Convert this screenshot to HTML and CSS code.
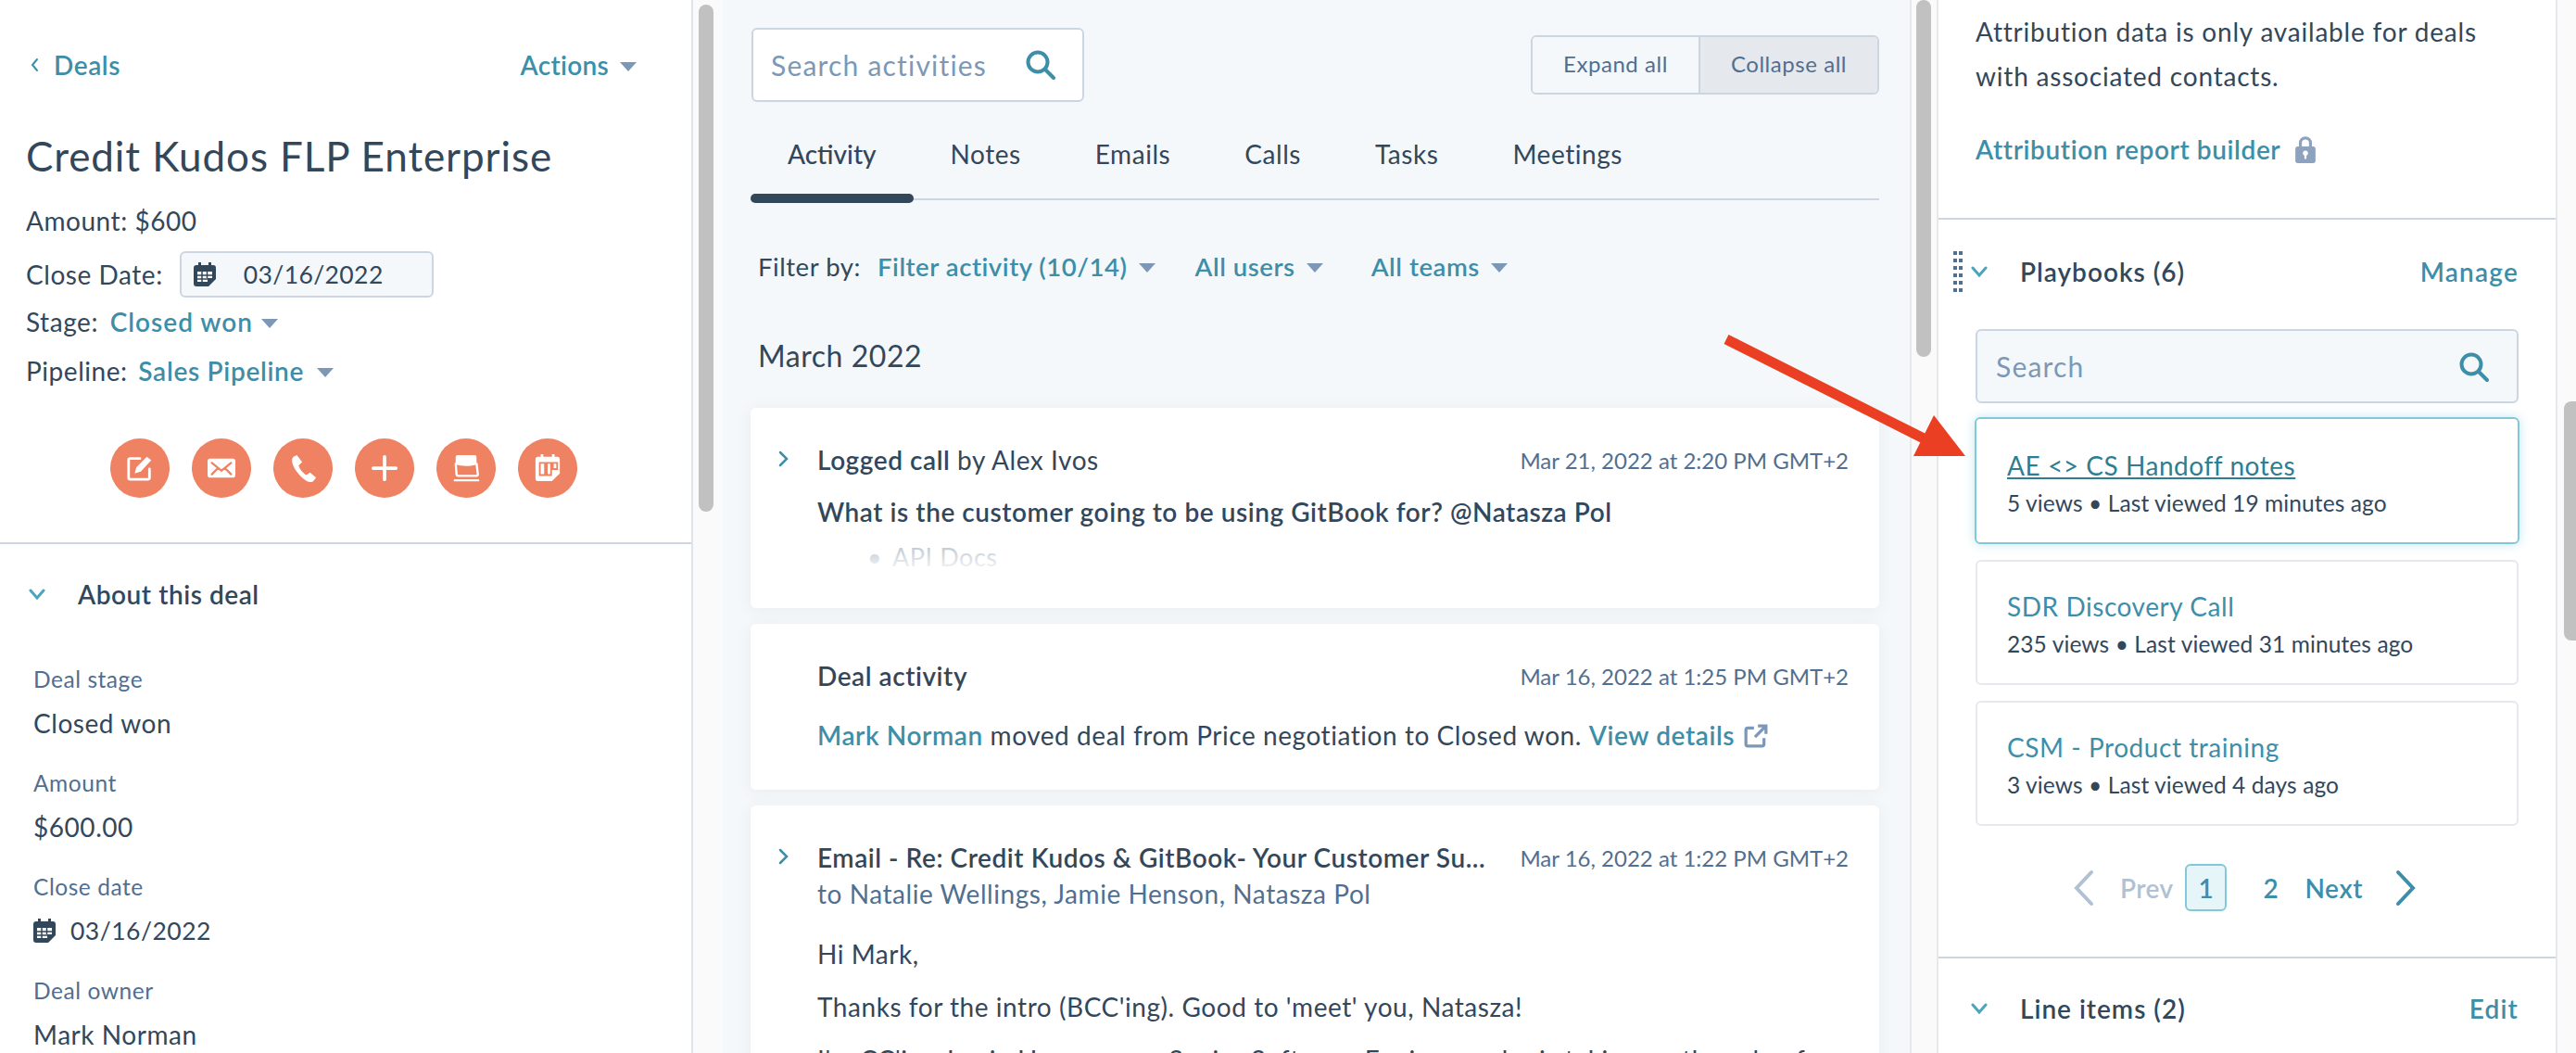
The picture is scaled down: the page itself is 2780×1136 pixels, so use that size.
FILE: index.html
```html
<!DOCTYPE html>
<html lang="en">
<head>
<meta charset="utf-8">
<title>Credit Kudos FLP Enterprise</title>
<link rel="stylesheet" href="styles.css">
</head>
<body>
<svg class="defs" width="0" height="0" aria-hidden="true">
  <symbol id="cal" viewBox="0 0 24 26">
    <path d="M5 0h3v3h8V0h3v3h2a3 3 0 0 1 3 3v12l-8 8H3a3 3 0 0 1-3-3V6a3 3 0 0 1 3-3h2z" fill="currentColor"/>
    <path d="M4 10h16v7h-5v4H4z" fill="#fff"/>
    <path d="M9 10v11M14.500 10v7M4 14h16M4 18h11" stroke="currentColor" stroke-width="1.500"/>
  </symbol>
  <symbol id="search" viewBox="0 0 32 32">
    <circle cx="13" cy="13" r="10.500" fill="none" stroke="currentColor" stroke-width="4"/>
    <path d="M21 21l9 9" stroke="currentColor" stroke-width="4" stroke-linecap="round"/>
  </symbol>
</svg>

<main class="app">
  <section class="left">
    <div class="left-head">
      <a class="link deals"><svg class="back" viewBox="0 0 10 16"><path d="M8 2L3 8l5 6" fill="none" stroke="currentColor" stroke-width="2" stroke-linecap="round"/></svg>Deals</a>
      <a class="link head-action">Actions<i class="caret caret-wide"></i></a>
    </div>
    <h1 class="title">Credit Kudos FLP Enterprise</h1>
    <div class="meta-row amount">Amount: $600</div>
    <div class="meta-row date-row">Close Date:
      <div class="date-input"><svg class="cal-icon"><use href="#cal"/></svg><span>03/16/2022</span></div>
    </div>
    <div class="meta-row stage">Stage: <a class="link">Closed won<i class="caret"></i></a></div>
    <div class="meta-row pipeline">Pipeline: <a class="link">Sales Pipeline<i class="caret"></i></a></div>
    <div class="actions">
      <span class="action"><svg viewBox="0 0 32 32"><path d="M16 5H5a2 2 0 0 0-2 2v20a2 2 0 0 0 2 2h20a2 2 0 0 0 2-2V17" fill="none" stroke="#fff" stroke-width="3" stroke-linecap="round"/><path d="M10 22l2-7L24 3l5 4-12 13z" fill="#fff"/></svg></span>
      <span class="action"><svg viewBox="0 0 32 32"><path d="M3 5h26a3 3 0 0 1 3 3v16a3 3 0 0 1-3 3H3a3 3 0 0 1-3-3V8a3 3 0 0 1 3-3z" fill="#fff"/><path d="M5 10l11 9 11-9M5 23l7-7M27 23l-7-7" fill="none" stroke="#ef8263" stroke-width="2.500" stroke-linecap="round"/></svg></span>
      <span class="action"><svg viewBox="0 0 32 32"><path d="M5 3l4-2 6 8-4 4c1 4 5 9 9 11l4-3 7 6-3 4c-2 2-6 1-9-1C12 25 6 18 4 11 3 8 3 5 5 3z" fill="#fff"/></svg></span>
      <span class="action"><svg viewBox="0 0 32 32"><path d="M16 3v26M3 16h26" stroke="#fff" stroke-width="4" stroke-linecap="round"/></svg></span>
      <span class="action"><svg viewBox="0 0 32 32"><path d="M4 3a2 2 0 0 1 2-2h20a2 2 0 0 1 2 2v9c-7 2-17 2-24 0z" fill="#fff"/><path d="M4 10l1 13c0 1 1 2 2 2h21c1 0 2-1 1.500-2L28 10" fill="none" stroke="#fff" stroke-width="2.500"/><path d="M3 30h27" stroke="#fff" stroke-width="2.500" stroke-linecap="round"/></svg></span>
      <span class="action"><svg viewBox="0 0 32 32"><path d="M8 0h3v3h10V0h3v3h3a3 3 0 0 1 3 3v16l-9 9H5a3 3 0 0 1-3-3V6a3 3 0 0 1 3-3h3z" fill="#fff"/><path d="M7 10h6v14H7zM15 10h5v14h-5zM22 10h5v7h-5z" fill="none" stroke="#ef8263" stroke-width="2"/></svg></span>
    </div>
    <div class="about">
      <h2 class="sec-head about-head"><svg class="chev" viewBox="0 0 18 12"><path d="M2 2l7 8 7-8" fill="none" stroke="#4aa5bd" stroke-width="3" stroke-linecap="round"/></svg>About this deal</h2>
      <div class="field"><div class="f-label">Deal stage</div><div class="f-value">Closed won</div></div>
      <div class="field"><div class="f-label">Amount</div><div class="f-value">$600.00</div></div>
      <div class="field"><div class="f-label">Close date</div><div class="f-value f-date"><svg class="cal-icon small"><use href="#cal"/></svg>03/16/2022</div></div>
      <div class="field"><div class="f-label">Deal owner</div><div class="f-value">Mark Norman</div></div>
    </div>
  </section>

  <div class="gutter gutter-left"><span class="thumb thumb-left"></span></div>

  <section class="middle">
    <div class="toolbar">
      <div class="act-search"><span class="placeholder">Search activities</span><svg class="search-icon"><use href="#search"/></svg></div>
      <div class="toggle"><span class="tg">Expand all</span><span class="tg tg-on">Collapse all</span></div>
    </div>
    <nav class="tabs">
      <a class="tab tab-on">Activity</a><a class="tab">Notes</a><a class="tab">Emails</a><a class="tab">Calls</a><a class="tab">Tasks</a><a class="tab">Meetings</a>
    </nav>
    <div class="filters">
      <span class="f-by">Filter by:</span>
      <a class="link">Filter activity (10/14)<i class="caret"></i></a>
      <a class="link f-users">All users<i class="caret"></i></a>
      <a class="link">All teams<i class="caret"></i></a>
    </div>
    <h3 class="month">March 2022</h3>

    <article class="card card-call">
      <div class="c-head"><svg class="c-chev" viewBox="0 0 12 18"><path d="M2 2l7 7-7 7" fill="none" stroke="#3d8ea9" stroke-width="2.500" stroke-linecap="round"/></svg><div class="c-title"><b>Logged call</b> by Alex Ivos</div><time class="c-time">Mar 21, 2022 at 2:20 PM GMT+2</time></div>
      <p class="c-strong">What is the customer going to be using GitBook for? @Natasza Pol</p>
      <ul class="c-list"><li>API Docs</li></ul>
    </article>

    <article class="card card-deal">
      <div class="c-head"><div class="c-title"><b>Deal activity</b></div><time class="c-time">Mar 16, 2022 at 1:25 PM GMT+2</time></div>
      <p class="c-body"><a class="link">Mark Norman</a> moved deal from Price negotiation to Closed won. <a class="link">View details</a><svg class="ext" viewBox="0 0 24 24"><path d="M10 4H4a2 2 0 0 0-2 2v14a2 2 0 0 0 2 2h14a2 2 0 0 0 2-2v-6M14 2h8v8M22 2L11 13" fill="none" stroke="#7c98b6" stroke-width="3"/></svg></p>
    </article>

    <article class="card card-email">
      <div class="c-head"><svg class="c-chev" viewBox="0 0 12 18"><path d="M2 2l7 7-7 7" fill="none" stroke="#3d8ea9" stroke-width="2.500" stroke-linecap="round"/></svg><div class="c-title"><b>Email - Re: Credit Kudos &amp; GitBook- Your Customer Su...</b></div><time class="c-time">Mar 16, 2022 at 1:22 PM GMT+2</time></div>
      <div class="c-to">to Natalie Wellings, Jamie Henson, Natasza Pol</div>
      <p class="c-line first">Hi Mark,</p>
      <p class="c-line">Thanks for the intro (BCC'ing). Good to 'meet' you, Natasza!</p>
      <p class="c-line">I'm CC'ing Jamie Henson, our Senior Software Engineer, who is taking on the role of</p>
    </article>
  </section>

  <div class="gutter gutter-mid"><span class="thumb thumb-mid"></span></div>

  <section class="right">
    <div class="attr">
      <p class="attr-text">Attribution data is only available for deals<br>with associated contacts.</p>
      <a class="link attr-link">Attribution report builder<svg class="lock" viewBox="0 0 24 32"><path d="M6 13V8a6 6 0 0 1 12 0v5" fill="none" stroke="#8da2bf" stroke-width="3.500"/><rect y="12" width="24" height="20" rx="3" fill="#8da2bf"/><circle cx="12" cy="20" r="3" fill="#fff"/><rect x="10.800" y="20" width="2.400" height="7" fill="#fff"/></svg></a>
    </div>
    <div class="playbooks">
      <div class="sec-head r-head">
        <svg class="grip" viewBox="0 0 10 44"><path d="M0 0h4v4H0zM6 0h4v4H6zM0 8h4v4H0zM6 8h4v4H6zM0 16h4v4H0zM6 16h4v4H6zM0 24h4v4H0zM6 24h4v4H6zM0 32h4v4H0zM6 32h4v4H6zM0 40h4v4H0zM6 40h4v4H6z" fill="#516f90"/></svg>
        <svg class="chev" viewBox="0 0 18 12"><path d="M2 2l7 8 7-8" fill="none" stroke="#4aa5bd" stroke-width="3" stroke-linecap="round"/></svg>
        <span class="r-title">Playbooks (6)</span><a class="link r-link">Manage</a>
      </div>
      <div class="pb-search"><span class="placeholder">Search</span><svg class="search-icon"><use href="#search"/></svg></div>
      <div class="pb pb-focus"><a class="pb-title pb-under">AE &lt;&gt; CS Handoff notes</a><div class="pb-meta">5 views • Last viewed 19 minutes ago</div></div>
      <div class="pb"><a class="pb-title">SDR Discovery Call</a><div class="pb-meta">235 views • Last viewed 31 minutes ago</div></div>
      <div class="pb"><a class="pb-title">CSM - Product training</a><div class="pb-meta">3 views • Last viewed 4 days ago</div></div>
      <div class="pager">
        <svg class="pg-chev" viewBox="0 0 22 40"><path d="M19 3L3 20l16 17" fill="none" stroke="#b0c1d4" stroke-width="4" stroke-linecap="round"/></svg>
        <span class="pg-prev">Prev</span>
        <span class="pg-num pg-on">1</span>
        <a class="link pg-num">2</a>
        <a class="link pg-next">Next</a>
        <svg class="pg-chev" viewBox="0 0 22 40"><path d="M3 3l16 17L3 37" fill="none" stroke="#3d8ea9" stroke-width="4" stroke-linecap="round"/></svg>
      </div>
    </div>
    <div class="sec-head r-head line-items">
      <svg class="chev" viewBox="0 0 18 12"><path d="M2 2l7 8 7-8" fill="none" stroke="#4aa5bd" stroke-width="3" stroke-linecap="round"/></svg>
      <span class="r-title">Line items (2)</span><a class="link r-link">Edit</a>
    </div>
  </section>

  <div class="gutter gutter-right"><span class="thumb thumb-right"></span></div>

  <svg class="arrow" viewBox="0 0 2780 1136" aria-hidden="true">
    <path d="M1863 366L2086 478" stroke="#ea3f22" stroke-width="11"/>
    <path d="M2087 448L2121 492H2065z" fill="#ea3f22"/>
  </svg>
</main>
</body>
</html>
```

FILE: styles.css
```css
* { box-sizing: border-box; }
html, body { margin: 0; height: 1136px; overflow: hidden; background: #fff; }
body { font-family: Lato, "Open Sans", sans-serif; color: #33475b; font-size: 28px; letter-spacing: .55px; }
.defs { position: absolute; }
h1, h2, h3, p, ul { margin: 0; padding: 0; font-weight: 400; }
b { font-weight: 600; }
.link { color: #3d8ea9; font-weight: 600; letter-spacing: .6px; }
.app { position: relative; display: grid; grid-template-columns: 748px 32px 1281px 31px 668px 20px; height: 1136px; overflow: hidden; }
.caret { display: inline-block; width: 0; height: 0; margin-left: 14px; vertical-align: 4px; border: 9px solid transparent; border-top: 10px solid #7c98b6; border-bottom: 0; }
.caret-wide { margin-left: 12px; }

/* left */
.left { border-right: 2px solid #dfe3eb; background: #fff; overflow: hidden; }
.left-head { display: flex; justify-content: space-between; align-items: center; height: 40px; margin-top: 50px; padding: 0 59px 0 32px; }
.deals { display: flex; align-items: center; gap: 16px; }
.head-action { letter-spacing: .3px; }
.back { width: 10px; height: 16px; }
.title { margin: 48px 0 0 28px; font-size: 44px; line-height: 60px; letter-spacing: .9px; }
.meta-row { padding-left: 28px; line-height: 40px; font-size: 28px; }
.amount { margin-top: 20px; }
.date-row { display: flex; align-items: center; gap: 18px; margin-top: 13px; height: 50px; }
.date-input { display: flex; align-items: center; width: 274px; height: 50px; padding-left: 13px; gap: 30px; font-size: 26.500px; letter-spacing: .4px; background: #f5f8fa; border: 2px solid #cbd6e2; border-radius: 6px; }
.cal-icon { width: 24px; height: 26px; color: #33475b; flex: none; }
.cal-icon.small { margin-right: 16px; vertical-align: -3px; }
.stage { margin-top: 6px; }
.stage .link { margin-left: 5px; letter-spacing: 1px; }
.stage .caret { margin-left: 9px; }
.pipeline { margin-top: 13px; }
.pipeline .link { margin-left: 4px; letter-spacing: .7px; }
.actions { display: flex; gap: 24px; margin-top: 53px; padding: 0 0 48px 119px; }
.action { display: flex; align-items: center; justify-content: center; width: 64px; height: 64px; border-radius: 50%; background: #ef8263; }
.action svg { width: 30px; height: 30px; }
.about { border-top: 2px solid #cbd6e2; padding-left: 36px; }
.sec-head { font-weight: 600; font-size: 28px; }
.about-head { display: flex; align-items: center; gap: 35px; height: 40px; margin: 34px 0 56px -5px; }
.chev { width: 18px; height: 12px; flex: none; }
.field { height: 112px; }
.f-label { line-height: 32px; font-size: 24.500px; color: #516f90; }
.f-value { margin-top: 8px; line-height: 46px; font-size: 28px; }
.f-date { font-size: 26.500px; letter-spacing: .5px; }

/* scroll gutters */
.gutter { background: #fafafa; position: relative; }
.thumb { position: absolute; display: block; background: #c1c1c1; border-radius: 8px; }
.thumb-left { left: 6px; width: 16px; top: 5px; height: 547px; }
.gutter-mid { border-left: 2px solid #e8e8e8; border-right: 2px solid #e8e8e8; }
.thumb-mid { left: 5px; width: 16px; top: 0; height: 385px; }
.thumb-right { left: 7px; width: 13px; top: 433px; height: 258px; border-radius: 8px 0 0 8px; }

/* middle */
.middle { background: #f5f8fa; padding: 30px 33px 0 30px; overflow: hidden; }
.toolbar { display: flex; justify-content: space-between; align-items: center; }
.act-search { display: flex; align-items: center; justify-content: space-between; width: 359px; height: 80px; margin-left: 1px; padding: 0 29px 0 19px; background: #fff; border: 2px solid #cbd6e2; border-radius: 6px; }
.placeholder { color: #7c98b6; font-size: 30px; letter-spacing: 1.200px; }
.search-icon { width: 32px; height: 32px; color: #3d8ea9; }
.toggle { display: flex; height: 64px; border: 2px solid #cbd6e2; border-radius: 6px; overflow: hidden; font-size: 24px; color: #516f90; line-height: 58px; }
.tg { display: flex; align-items: center; justify-content: center; width: 179px; background: #f5f8fa; padding-bottom: 2px; }
.tg-on { width: 193px; background: #e5e8ed; border-left: 2px solid #cbd6e2; }
.tabs { display: flex; height: 76px; margin-top: 30px; border-bottom: 2px solid #cbd6e2; }
.tab { position: relative; padding: 0 40px; line-height: 42px; height: 42px; margin-top: 5px; font-size: 28px; white-space: nowrap; }
.tab-on { font-weight: 500; letter-spacing: 0; }
.tab-on::after { content: ""; position: absolute; left: 0; right: 0; top: 64px; height: 10px; background: #33475b; border-radius: 5px; }
.filters { display: flex; align-items: center; gap: 18px; height: 40px; margin: 51px 0 0 8px; font-size: 27.500px; }
.filters .link { margin-right: 25px; white-space: nowrap; letter-spacing: .55px; }
.filters .f-users { margin-right: 34px; }
.filters .caret { margin-left: 12px; }
.month { margin: 55px 0 0 8px; line-height: 44px; font-size: 32px; }
.card { position: relative; background: #fff; border-radius: 6px; box-shadow: 0 2px 16px rgba(66, 91, 118, .07); padding: 38px 33px 0 72px; margin-bottom: 17px; overflow: hidden; }
.card-call { margin-top: 34px; height: 216px; }
.card-deal { height: 179px; }
.card-email { height: 330px; margin-bottom: 0; }
.c-head { position: relative; display: flex; justify-content: space-between; align-items: center; height: 36px; font-size: 28px; }
.c-chev { position: absolute; left: -42px; top: 8px; width: 12px; height: 18px; }
.c-title { white-space: nowrap; flex: none; }
.c-time { font-size: 24px; color: #516f90; white-space: nowrap; letter-spacing: 0; }
.c-strong { margin-top: 18px; line-height: 40px; font-weight: 600; font-size: 28px; white-space: nowrap; }
.c-list { list-style: none; margin: 9px 0 0 81px; line-height: 40px; font-size: 27px; color: #b8c4cf; position: relative; }
.c-list li::before { content: "•"; position: absolute; left: -27px; }
.card-call::after { content: ""; position: absolute; left: 0; right: 0; top: 146px; height: 34px; background: linear-gradient(rgba(255, 255, 255, 0), #fff); }
.c-body { margin-top: 26px; line-height: 40px; white-space: nowrap; font-size: 28px; }
.ext { width: 26px; height: 26px; margin-left: 10px; vertical-align: -3px; }
.c-to { margin-top: 1px; line-height: 40px; color: #516f90; font-size: 28px; }
.c-line { line-height: 40px; margin-top: 17px; white-space: nowrap; font-size: 28px; }
.c-line.first { margin-top: 25px; }

/* right */
.right { border-right: 2px solid #e5e8ed; background: #fff; overflow: hidden; }
.attr { padding: 10px 40px 0; height: 237px; border-bottom: 2px solid #cbd6e2; }
.attr-text { line-height: 48px; font-size: 28px; letter-spacing: .8px; }
.attr-link { display: flex; align-items: center; gap: 16px; height: 40px; margin-top: 35px; }
.lock { width: 22px; height: 29px; }
.playbooks { padding: 36px 40px 0; height: 797px; border-bottom: 2px solid #cbd6e2; }
.r-head { position: relative; display: flex; align-items: center; height: 40px; }
.r-head .chev { margin-left: -5px; }
.r-title { margin-left: 35px; flex: 1; letter-spacing: 1px; }
.r-link { letter-spacing: 1.200px; }
.grip { position: absolute; left: -24px; top: -2px; width: 10px; height: 44px; }
.line-items { margin-top: 34px; padding: 0 40px; }
.pb-search { display: flex; align-items: center; justify-content: space-between; height: 80px; margin-top: 42px; padding: 0 30px 0 20px; background: #f5f8fa; border: 2px solid #cbd6e2; border-radius: 6px; }
.pb-search .search-icon { margin-top: 2px; }
.pb { height: 135px; margin-top: 17px; padding: 28px 32px 0; border: 2px solid #e5e8ed; border-radius: 6px; }
.pb-focus { height: 137px; margin: 15px -1px 16px; padding-left: 33px; padding-top: 30px; border-color: #81c9d9; box-shadow: 0 0 12px rgba(129, 201, 217, .45); }
.pb-title { display: block; color: #3d8ea9; line-height: 40px; font-size: 28px; }
.pb-under { color: #2e7d91; text-decoration: underline; }
.pb-meta { margin-top: 2px; line-height: 38px; font-size: 24.500px; letter-spacing: .1px; }
.pager { display: flex; align-items: center; height: 51px; margin: 41px 0 0 106px; }
.pg-chev { width: 22px; height: 40px; flex: none; }
.pg-prev { margin: 0 13px 0 28px; color: #b0c1d4; font-weight: 600; letter-spacing: .4px; }
.pg-num { display: flex; align-items: center; justify-content: center; width: 45px; height: 51px; font-weight: 600; }
.pg-on { color: #3d8ea9; background: #e5f5f8; border: 2px solid #81c9d9; border-radius: 6px; margin-right: 25px; }
.pg-next { margin: 0 35px 0 14px; }

.arrow { position: absolute; inset: 0; width: 2780px; height: 1136px; pointer-events: none; }
```
